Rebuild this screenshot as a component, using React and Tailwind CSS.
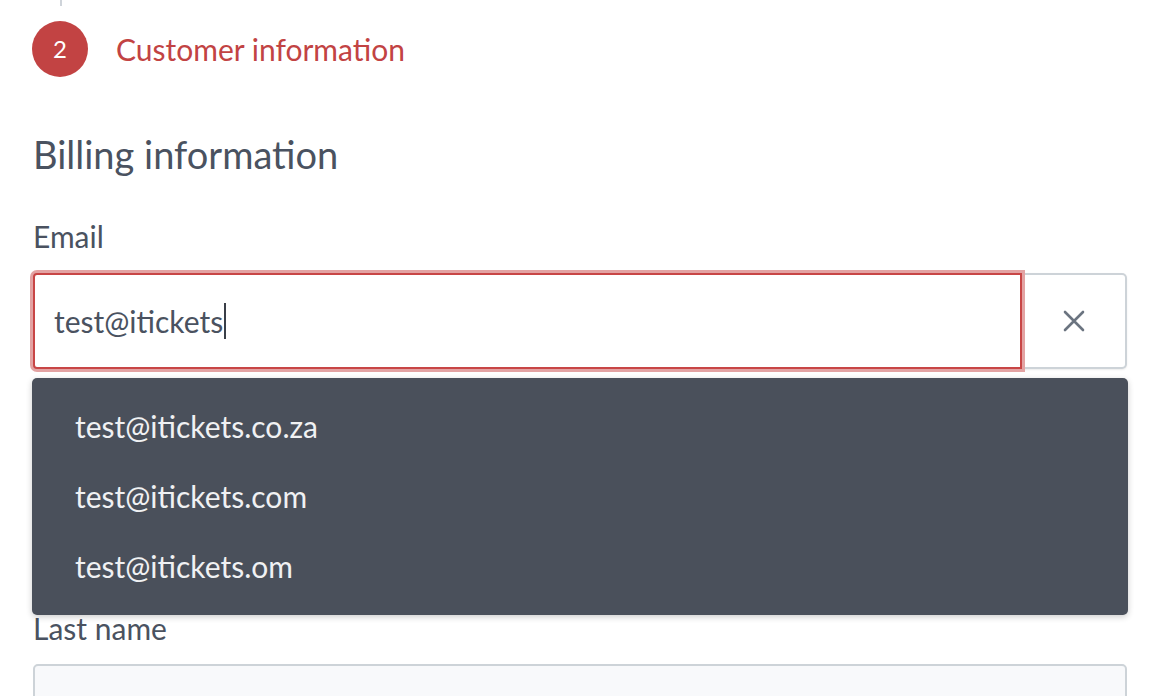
import React from 'react';

const suggestions = ['test@itickets.co.za', 'test@itickets.com', 'test@itickets.om'];

const Label = ({ children, className = '' }) => (
  <div className={`text-[30px] leading-[36px] text-[#4a5260] ${className}`}>{children}</div>
);

const App = () => {
  return (
    <div className="min-h-[696px] bg-white pl-[33px] pr-[23px] font-['Lato','Liberation_Sans',sans-serif] overflow-hidden">
      {/* step indicator */}
      <div className="ml-[27px] h-[6px] w-[2px] bg-[#cfd4da]" />
      <div className="mt-[15px] flex items-center -ml-[1px]">
        <div className="flex h-[56px] w-[56px] items-center justify-center rounded-full bg-[#c24343] text-[24px] text-white">
          2
        </div>
        <span className="ml-[28px] text-[30px] leading-[45px] text-[#c24343]">Customer information</span>
      </div>

      <h2 className="mt-[58px] text-[38px] leading-none text-[#4a5260]">Billing information</h2>

      <Label className="mt-[45px]">Email</Label>
      <div className="relative mt-[19px]">
        <div className="flex">
          <div className="relative z-10 flex h-[96px] flex-1 items-center rounded-l-[4px] border-2 border-[#c84646] bg-white pl-[19px] shadow-[0_0_0_3px_#e3a3a3]">
            <span className="text-[30px] text-[#4a5260]">test@itickets</span>
            <span className="ml-[1px] h-[36px] w-[2px] bg-[#3a3f48]" />
          </div>
          <button className="flex h-[96px] w-[105px] items-center justify-center rounded-r-[5px] border-2 border-l-0 border-[#cdd3d8] bg-white shadow-[0_1px_2px_rgba(0,0,0,0.08)]">
            <svg width="22" height="22" viewBox="0 0 22 22" fill="none" stroke="#6b7480" strokeWidth="2.6" strokeLinecap="round">
              <path d="M2 2 L20 20 M20 2 L2 20" />
            </svg>
          </button>
        </div>

        {/* autocomplete menu */}
        <div className="absolute left-[-1px] right-[-1px] top-[105px] z-20 rounded-[5px] bg-[#4a505b] pt-[13px] pb-[14px] shadow-[0_2px_6px_rgba(0,0,0,0.2)]">
          {suggestions.map((item) => (
            <div key={item} className="flex h-[70px] items-center pl-[43px] text-[30px] text-[#f0f1f3]">
              {item}
            </div>
          ))}
        </div>
      </div>

      <Label className="mt-[45px]">First name</Label>
      <div className="mt-[19px] h-[96px] rounded-[5px] border-2 border-[#cdd3d8] bg-[#f8f9fb]" />

      <Label className="mt-[45px]">Last name</Label>
      <div className="mt-[18px] h-[96px] rounded-[5px] border-2 border-[#cdd3d8] bg-[#f8f9fb]" />
    </div>
  );
};

export default App;
